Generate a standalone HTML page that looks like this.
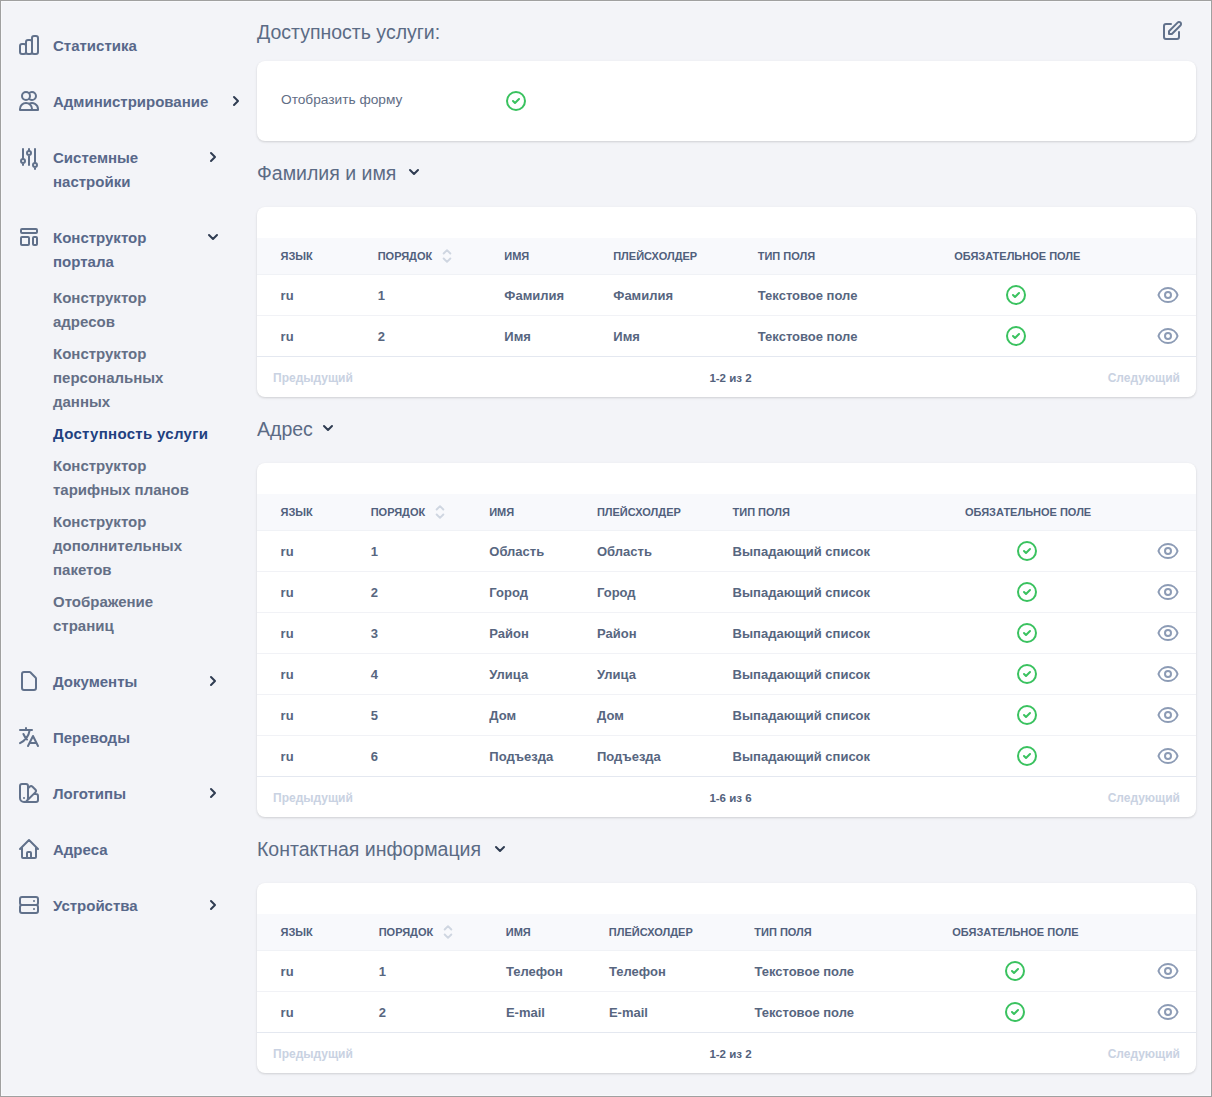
<!DOCTYPE html>
<html><head><meta charset="utf-8"><style>
html,body{margin:0;padding:0}
body{width:1212px;height:1097px;overflow:hidden;background:#f3f4f8;position:relative;font-family:"Liberation Sans", sans-serif}
.t{position:absolute;white-space:nowrap;line-height:20px}
.i{position:absolute;overflow:visible}
.card{position:absolute;left:257px;width:939px;background:#fff;border-radius:8px;box-shadow:0 1px 3px rgba(0,0,0,0.1),0 1px 2px rgba(0,0,0,0.06);overflow:hidden}
.thb{position:absolute;left:0;right:0;height:36px;background:#f8f9fc;border-bottom:1px solid #f0f2f6}
.rb{position:absolute;left:0;right:0;height:1px}
.frame{position:absolute;left:0;top:0;width:1210px;height:1095px;border:1px solid #a0a0a0;box-shadow:inset 0 0 0 1px #f8f9fc;z-index:10;pointer-events:none}
</style></head><body>
<svg class="i" style="left:17px;top:33px;" width="24" height="24" viewBox="0 0 24 24" fill="none" stroke="#61718b" stroke-width="2" stroke-linecap="round" stroke-linejoin="round"><path d="M9 19v-6a2 2 0 00-2-2H5a2 2 0 00-2 2v6a2 2 0 002 2h2a2 2 0 002-2zm0 0V9a2 2 0 012-2h2a2 2 0 012 2v10m-6 0a2 2 0 002 2h2a2 2 0 002-2m0 0V5a2 2 0 012-2h2a2 2 0 012 2v14a2 2 0 01-2 2h-2a2 2 0 01-2-2z"/></svg>
<div class="t" style="left:53px;top:35.65px;font-size:15px;font-weight:700;color:#58688a;">Статистика</div>
<svg class="i" style="left:17px;top:89px;" width="24" height="24" viewBox="0 0 24 24" fill="none" stroke="#61718b" stroke-width="2" stroke-linecap="round" stroke-linejoin="round"><path d="M12 4.354a4 4 0 110 5.292M15 21H3v-1a6 6 0 0112 0v1zm0 0h6v-1a6 6 0 00-9-5.197M13 7a4 4 0 11-8 0 4 4 0 018 0z"/></svg>
<div class="t" style="left:53px;top:91.65px;font-size:15px;font-weight:700;color:#58688a;">Администрирование</div>
<svg class="i" style="left:231px;top:95px" width="12" height="12" viewBox="0 0 12 12" fill="none" stroke="#2f3c52" stroke-width="2" stroke-linecap="round" stroke-linejoin="round"><path d="M3 2l4 4-4 4"/></svg>
<svg class="i" style="left:17px;top:145px;" width="24" height="24" viewBox="0 0 24 24" fill="none" stroke="#61718b" stroke-width="2" stroke-linecap="round" stroke-linejoin="round"><path d="M12 6V4m0 2a2 2 0 100 4m0-4a2 2 0 110 4m-6 8a2 2 0 100-4m0 4a2 2 0 110-4m0 4v2m0-6V4m6 6v10m6 2a2 2 0 100-4m0 4a2 2 0 110-4m0 4v2m0-6V4"/></svg>
<div class="t" style="left:53px;top:147.65px;font-size:15px;font-weight:700;color:#58688a;">Системные</div>
<div class="t" style="left:53px;top:171.65px;font-size:15px;font-weight:700;color:#58688a;">настройки</div>
<svg class="i" style="left:208px;top:151px" width="12" height="12" viewBox="0 0 12 12" fill="none" stroke="#2f3c52" stroke-width="2" stroke-linecap="round" stroke-linejoin="round"><path d="M3 2l4 4-4 4"/></svg>
<svg class="i" style="left:17px;top:225px;" width="24" height="24" viewBox="0 0 24 24" fill="none" stroke="#61718b" stroke-width="2" stroke-linecap="round" stroke-linejoin="round"><path d="M4 5a1 1 0 011-1h14a1 1 0 011 1v2a1 1 0 01-1 1H5a1 1 0 01-1-1V5zM4 13a1 1 0 011-1h6a1 1 0 011 1v6a1 1 0 01-1 1H5a1 1 0 01-1-1v-6zM16 13a1 1 0 011-1h2a1 1 0 011 1v6a1 1 0 01-1 1h-2a1 1 0 01-1-1v-6z"/></svg>
<div class="t" style="left:53px;top:227.65px;font-size:15px;font-weight:700;color:#58688a;">Конструктор</div>
<div class="t" style="left:53px;top:251.65px;font-size:15px;font-weight:700;color:#58688a;">портала</div>
<svg class="i" style="left:207px;top:231px" width="12" height="12" viewBox="0 0 12 12" fill="none" stroke="#2f3c52" stroke-width="2" stroke-linecap="round" stroke-linejoin="round"><path d="M2 4l4 4 4-4"/></svg>
<div class="t" style="left:53px;top:287.65px;font-size:15px;font-weight:700;color:#646f86;">Конструктор</div>
<div class="t" style="left:53px;top:311.65px;font-size:15px;font-weight:700;color:#646f86;">адресов</div>
<div class="t" style="left:53px;top:343.65px;font-size:15px;font-weight:700;color:#646f86;">Конструктор</div>
<div class="t" style="left:53px;top:367.65px;font-size:15px;font-weight:700;color:#646f86;">персональных</div>
<div class="t" style="left:53px;top:391.65px;font-size:15px;font-weight:700;color:#646f86;">данных</div>
<div class="t" style="left:53px;top:423.65px;font-size:15px;font-weight:700;color:#21407f;letter-spacing:0.3px">Доступность услуги</div>
<div class="t" style="left:53px;top:455.65px;font-size:15px;font-weight:700;color:#646f86;">Конструктор</div>
<div class="t" style="left:53px;top:479.65px;font-size:15px;font-weight:700;color:#646f86;">тарифных планов</div>
<div class="t" style="left:53px;top:511.65px;font-size:15px;font-weight:700;color:#646f86;">Конструктор</div>
<div class="t" style="left:53px;top:535.65px;font-size:15px;font-weight:700;color:#646f86;">дополнительных</div>
<div class="t" style="left:53px;top:559.65px;font-size:15px;font-weight:700;color:#646f86;">пакетов</div>
<div class="t" style="left:53px;top:591.65px;font-size:15px;font-weight:700;color:#646f86;">Отображение</div>
<div class="t" style="left:53px;top:615.65px;font-size:15px;font-weight:700;color:#646f86;">страниц</div>
<svg class="i" style="left:17px;top:669px;" width="24" height="24" viewBox="0 0 24 24" fill="none" stroke="#61718b" stroke-width="2" stroke-linecap="round" stroke-linejoin="round"><path d="M7 21h10a2 2 0 002-2V9.414a1 1 0 00-.293-.707l-5.414-5.414A1 1 0 0012.586 3H7a2 2 0 00-2 2v14a2 2 0 002 2z"/></svg>
<div class="t" style="left:53px;top:671.65px;font-size:15px;font-weight:700;color:#58688a;">Документы</div>
<svg class="i" style="left:208px;top:675px" width="12" height="12" viewBox="0 0 12 12" fill="none" stroke="#2f3c52" stroke-width="2" stroke-linecap="round" stroke-linejoin="round"><path d="M3 2l4 4-4 4"/></svg>
<svg class="i" style="left:17px;top:725px;" width="24" height="24" viewBox="0 0 24 24" fill="none" stroke="#61718b" stroke-width="2" stroke-linecap="round" stroke-linejoin="round"><path d="M3 5h12M9 3v2m1.048 9.5A18.022 18.022 0 016.412 9m6.088 9h7M11 21l5-10 5 10M12.751 5C11.783 10.77 8.07 15.61 3 18.129"/></svg>
<div class="t" style="left:53px;top:727.65px;font-size:15px;font-weight:700;color:#58688a;">Переводы</div>
<svg class="i" style="left:17px;top:781px;" width="24" height="24" viewBox="0 0 24 24" fill="none" stroke="#61718b" stroke-width="2" stroke-linecap="round" stroke-linejoin="round"><path d="M7 21a4 4 0 01-4-4V5a2 2 0 012-2h4a2 2 0 012 2v12a4 4 0 01-4 4zm0 0h12a2 2 0 002-2v-4a2 2 0 00-2-2h-2.343M11 7.343l1.657-1.657a2 2 0 012.828 0l2.829 2.829a2 2 0 010 2.828l-8.486 8.485M7 17h.01"/></svg>
<div class="t" style="left:53px;top:783.65px;font-size:15px;font-weight:700;color:#58688a;">Логотипы</div>
<svg class="i" style="left:208px;top:787px" width="12" height="12" viewBox="0 0 12 12" fill="none" stroke="#2f3c52" stroke-width="2" stroke-linecap="round" stroke-linejoin="round"><path d="M3 2l4 4-4 4"/></svg>
<svg class="i" style="left:17px;top:837px;" width="24" height="24" viewBox="0 0 24 24" fill="none" stroke="#61718b" stroke-width="2" stroke-linecap="round" stroke-linejoin="round"><path d="M3 12l2-2m0 0l7-7 7 7M5 10v10a1 1 0 001 1h3m10-11l2 2m-2-2v10a1 1 0 01-1 1h-3m-6 0a1 1 0 001-1v-4a1 1 0 011-1h2a1 1 0 011 1v4a1 1 0 001 1m-6 0h6"/></svg>
<div class="t" style="left:53px;top:839.65px;font-size:15px;font-weight:700;color:#58688a;">Адреса</div>
<svg class="i" style="left:17px;top:893px;" width="24" height="24" viewBox="0 0 24 24" fill="none" stroke="#61718b" stroke-width="2" stroke-linecap="round" stroke-linejoin="round"><path d="M5 12h14M5 12a2 2 0 01-2-2V6a2 2 0 012-2h14a2 2 0 012 2v4a2 2 0 01-2 2M5 12a2 2 0 00-2 2v4a2 2 0 002 2h14a2 2 0 002-2v-4a2 2 0 00-2-2m-2-4h.01M17 16h.01"/></svg>
<div class="t" style="left:53px;top:895.65px;font-size:15px;font-weight:700;color:#58688a;">Устройства</div>
<svg class="i" style="left:208px;top:899px" width="12" height="12" viewBox="0 0 12 12" fill="none" stroke="#2f3c52" stroke-width="2" stroke-linecap="round" stroke-linejoin="round"><path d="M3 2l4 4-4 4"/></svg>
<div class="t" style="left:257px;top:22.04px;font-size:19.5px;font-weight:400;color:#5b6b85;">Доступность услуги:</div>
<svg class="i" style="left:1160px;top:19px;" width="24" height="24" viewBox="0 0 24 24" fill="none" stroke="#61718b" stroke-width="2" stroke-linecap="round" stroke-linejoin="round"><path d="M11 5H6a2 2 0 00-2 2v11a2 2 0 002 2h11a2 2 0 002-2v-5m-1.414-9.414a2 2 0 112.828 2.828L11.828 15H9v-2.828l8.586-8.586z"/></svg>
<div class="card" style="top:61px;height:80px"></div>
<div class="t" style="left:281px;top:90.15px;font-size:13.7px;font-weight:400;color:#5f6d85;">Отобразить форму</div>
<svg class="i" style="left:504px;top:89px;" width="24" height="24" viewBox="0 0 24 24" fill="none" stroke="#3ac25f" stroke-width="2" stroke-linecap="round" stroke-linejoin="round"><path d="M9 12l2 2 4-4m6 2a9 9 0 11-18 0 9 9 0 0118 0z"/></svg>
<div class="t" style="left:257px;top:162.74px;font-size:19.5px;font-weight:400;color:#5b6b85;">Фамилия и имя</div>
<svg class="i" style="left:408px;top:166px" width="12" height="12" viewBox="0 0 12 12" fill="none" stroke="#2f3c52" stroke-width="2" stroke-linecap="round" stroke-linejoin="round"><path d="M2 4l4 4 4-4"/></svg>
<div class="card" style="top:207px;height:190px">
<div class="thb" style="top:31px"></div>
<div class="rb" style="top:108px;background:#f1f2f6"></div>
<div class="rb" style="top:149px;background:#e4e8f0"></div>
</div>
<div class="t" style="left:280.5px;top:246.19px;font-size:11px;font-weight:700;color:#50607c;">ЯЗЫК</div>
<div class="t" style="left:377.7px;top:246.19px;font-size:11px;font-weight:700;color:#50607c;">ПОРЯДОК</div>
<div class="t" style="left:504.25px;top:246.19px;font-size:11px;font-weight:700;color:#50607c;">ИМЯ</div>
<div class="t" style="left:613.2px;top:246.19px;font-size:11px;font-weight:700;color:#50607c;">ПЛЕЙСХОЛДЕР</div>
<div class="t" style="left:757.7px;top:246.19px;font-size:11px;font-weight:700;color:#50607c;">ТИП ПОЛЯ</div>
<div class="t" style="left:954.2px;top:246.19px;font-size:11px;font-weight:700;color:#50607c;">ОБЯЗАТЕЛЬНОЕ ПОЛЕ</div>
<svg class="i" style="left:437.2px;top:246px;" width="20" height="20" viewBox="0 0 24 24" fill="none" stroke="#cfd6e1" stroke-width="2.3" stroke-linecap="round" stroke-linejoin="round"><path d="M8 9l4-4 4 4m0 6l-4 4-4-4"/></svg>
<div class="t" style="left:280.6px;top:285.50px;font-size:13px;font-weight:700;color:#57667f;">ru</div>
<div class="t" style="left:377.8px;top:285.50px;font-size:13px;font-weight:700;color:#57667f;">1</div>
<div class="t" style="left:504.35px;top:285.50px;font-size:13px;font-weight:700;color:#57667f;">Фамилия</div>
<div class="t" style="left:613.3000000000001px;top:285.50px;font-size:13px;font-weight:700;color:#57667f;">Фамилия</div>
<div class="t" style="left:757.8000000000001px;top:285.50px;font-size:13px;font-weight:700;color:#57667f;">Текстовое поле</div>
<svg class="i" style="left:1004px;top:283px;" width="24" height="24" viewBox="0 0 24 24" fill="none" stroke="#3ac25f" stroke-width="2" stroke-linecap="round" stroke-linejoin="round"><path d="M9 12l2 2 4-4m6 2a9 9 0 11-18 0 9 9 0 0118 0z"/></svg>
<svg class="i" style="left:1156px;top:283px;" width="24" height="24" viewBox="0 0 24 24" fill="none" stroke="#8c9bb5" stroke-width="2" stroke-linecap="round" stroke-linejoin="round"><path d="M15 12a3 3 0 11-6 0 3 3 0 016 0z"/><path d="M2.458 12C3.732 7.943 7.523 5 12 5c4.478 0 8.268 2.943 9.542 7-1.274 4.057-5.064 7-9.542 7-4.477 0-8.268-2.943-9.542-7z"/></svg>
<div class="t" style="left:280.6px;top:326.50px;font-size:13px;font-weight:700;color:#57667f;">ru</div>
<div class="t" style="left:377.8px;top:326.50px;font-size:13px;font-weight:700;color:#57667f;">2</div>
<div class="t" style="left:504.35px;top:326.50px;font-size:13px;font-weight:700;color:#57667f;">Имя</div>
<div class="t" style="left:613.3000000000001px;top:326.50px;font-size:13px;font-weight:700;color:#57667f;">Имя</div>
<div class="t" style="left:757.8000000000001px;top:326.50px;font-size:13px;font-weight:700;color:#57667f;">Текстовое поле</div>
<svg class="i" style="left:1004px;top:324px;" width="24" height="24" viewBox="0 0 24 24" fill="none" stroke="#3ac25f" stroke-width="2" stroke-linecap="round" stroke-linejoin="round"><path d="M9 12l2 2 4-4m6 2a9 9 0 11-18 0 9 9 0 0118 0z"/></svg>
<svg class="i" style="left:1156px;top:324px;" width="24" height="24" viewBox="0 0 24 24" fill="none" stroke="#8c9bb5" stroke-width="2" stroke-linecap="round" stroke-linejoin="round"><path d="M15 12a3 3 0 11-6 0 3 3 0 016 0z"/><path d="M2.458 12C3.732 7.943 7.523 5 12 5c4.478 0 8.268 2.943 9.542 7-1.274 4.057-5.064 7-9.542 7-4.477 0-8.268-2.943-9.542-7z"/></svg>
<div class="t" style="left:273px;top:368.34px;font-size:12px;font-weight:700;color:#c9d2e2;">Предыдущий</div>
<div class="t" style="left:265px;width:931px;text-align:center;top:368.02px;font-size:11.5px;font-weight:700;color:#52617c">1-2 из 2</div>
<div class="t" style="right:32px;top:368.34px;font-size:12px;font-weight:700;color:#c9d2e2">Следующий</div>
<div class="t" style="left:257px;top:418.74px;font-size:19.5px;font-weight:400;color:#5b6b85;">Адрес</div>
<svg class="i" style="left:322px;top:422px" width="12" height="12" viewBox="0 0 12 12" fill="none" stroke="#2f3c52" stroke-width="2" stroke-linecap="round" stroke-linejoin="round"><path d="M2 4l4 4 4-4"/></svg>
<div class="card" style="top:463px;height:354px">
<div class="thb" style="top:31px"></div>
<div class="rb" style="top:108px;background:#f1f2f6"></div>
<div class="rb" style="top:149px;background:#f1f2f6"></div>
<div class="rb" style="top:190px;background:#f1f2f6"></div>
<div class="rb" style="top:231px;background:#f1f2f6"></div>
<div class="rb" style="top:272px;background:#f1f2f6"></div>
<div class="rb" style="top:313px;background:#e4e8f0"></div>
</div>
<div class="t" style="left:280.5px;top:502.19px;font-size:11px;font-weight:700;color:#50607c;">ЯЗЫК</div>
<div class="t" style="left:370.7px;top:502.19px;font-size:11px;font-weight:700;color:#50607c;">ПОРЯДОК</div>
<div class="t" style="left:489.2px;top:502.19px;font-size:11px;font-weight:700;color:#50607c;">ИМЯ</div>
<div class="t" style="left:596.9px;top:502.19px;font-size:11px;font-weight:700;color:#50607c;">ПЛЕЙСХОЛДЕР</div>
<div class="t" style="left:732.5px;top:502.19px;font-size:11px;font-weight:700;color:#50607c;">ТИП ПОЛЯ</div>
<div class="t" style="left:965.0px;top:502.19px;font-size:11px;font-weight:700;color:#50607c;">ОБЯЗАТЕЛЬНОЕ ПОЛЕ</div>
<svg class="i" style="left:430.2px;top:502px;" width="20" height="20" viewBox="0 0 24 24" fill="none" stroke="#cfd6e1" stroke-width="2.3" stroke-linecap="round" stroke-linejoin="round"><path d="M8 9l4-4 4 4m0 6l-4 4-4-4"/></svg>
<div class="t" style="left:280.6px;top:541.50px;font-size:13px;font-weight:700;color:#57667f;">ru</div>
<div class="t" style="left:370.8px;top:541.50px;font-size:13px;font-weight:700;color:#57667f;">1</div>
<div class="t" style="left:489.3px;top:541.50px;font-size:13px;font-weight:700;color:#57667f;">Область</div>
<div class="t" style="left:597.0px;top:541.50px;font-size:13px;font-weight:700;color:#57667f;">Область</div>
<div class="t" style="left:732.6px;top:541.50px;font-size:13px;font-weight:700;color:#57667f;">Выпадающий список</div>
<svg class="i" style="left:1015px;top:539px;" width="24" height="24" viewBox="0 0 24 24" fill="none" stroke="#3ac25f" stroke-width="2" stroke-linecap="round" stroke-linejoin="round"><path d="M9 12l2 2 4-4m6 2a9 9 0 11-18 0 9 9 0 0118 0z"/></svg>
<svg class="i" style="left:1156px;top:539px;" width="24" height="24" viewBox="0 0 24 24" fill="none" stroke="#8c9bb5" stroke-width="2" stroke-linecap="round" stroke-linejoin="round"><path d="M15 12a3 3 0 11-6 0 3 3 0 016 0z"/><path d="M2.458 12C3.732 7.943 7.523 5 12 5c4.478 0 8.268 2.943 9.542 7-1.274 4.057-5.064 7-9.542 7-4.477 0-8.268-2.943-9.542-7z"/></svg>
<div class="t" style="left:280.6px;top:582.50px;font-size:13px;font-weight:700;color:#57667f;">ru</div>
<div class="t" style="left:370.8px;top:582.50px;font-size:13px;font-weight:700;color:#57667f;">2</div>
<div class="t" style="left:489.3px;top:582.50px;font-size:13px;font-weight:700;color:#57667f;">Город</div>
<div class="t" style="left:597.0px;top:582.50px;font-size:13px;font-weight:700;color:#57667f;">Город</div>
<div class="t" style="left:732.6px;top:582.50px;font-size:13px;font-weight:700;color:#57667f;">Выпадающий список</div>
<svg class="i" style="left:1015px;top:580px;" width="24" height="24" viewBox="0 0 24 24" fill="none" stroke="#3ac25f" stroke-width="2" stroke-linecap="round" stroke-linejoin="round"><path d="M9 12l2 2 4-4m6 2a9 9 0 11-18 0 9 9 0 0118 0z"/></svg>
<svg class="i" style="left:1156px;top:580px;" width="24" height="24" viewBox="0 0 24 24" fill="none" stroke="#8c9bb5" stroke-width="2" stroke-linecap="round" stroke-linejoin="round"><path d="M15 12a3 3 0 11-6 0 3 3 0 016 0z"/><path d="M2.458 12C3.732 7.943 7.523 5 12 5c4.478 0 8.268 2.943 9.542 7-1.274 4.057-5.064 7-9.542 7-4.477 0-8.268-2.943-9.542-7z"/></svg>
<div class="t" style="left:280.6px;top:623.50px;font-size:13px;font-weight:700;color:#57667f;">ru</div>
<div class="t" style="left:370.8px;top:623.50px;font-size:13px;font-weight:700;color:#57667f;">3</div>
<div class="t" style="left:489.3px;top:623.50px;font-size:13px;font-weight:700;color:#57667f;">Район</div>
<div class="t" style="left:597.0px;top:623.50px;font-size:13px;font-weight:700;color:#57667f;">Район</div>
<div class="t" style="left:732.6px;top:623.50px;font-size:13px;font-weight:700;color:#57667f;">Выпадающий список</div>
<svg class="i" style="left:1015px;top:621px;" width="24" height="24" viewBox="0 0 24 24" fill="none" stroke="#3ac25f" stroke-width="2" stroke-linecap="round" stroke-linejoin="round"><path d="M9 12l2 2 4-4m6 2a9 9 0 11-18 0 9 9 0 0118 0z"/></svg>
<svg class="i" style="left:1156px;top:621px;" width="24" height="24" viewBox="0 0 24 24" fill="none" stroke="#8c9bb5" stroke-width="2" stroke-linecap="round" stroke-linejoin="round"><path d="M15 12a3 3 0 11-6 0 3 3 0 016 0z"/><path d="M2.458 12C3.732 7.943 7.523 5 12 5c4.478 0 8.268 2.943 9.542 7-1.274 4.057-5.064 7-9.542 7-4.477 0-8.268-2.943-9.542-7z"/></svg>
<div class="t" style="left:280.6px;top:664.50px;font-size:13px;font-weight:700;color:#57667f;">ru</div>
<div class="t" style="left:370.8px;top:664.50px;font-size:13px;font-weight:700;color:#57667f;">4</div>
<div class="t" style="left:489.3px;top:664.50px;font-size:13px;font-weight:700;color:#57667f;">Улица</div>
<div class="t" style="left:597.0px;top:664.50px;font-size:13px;font-weight:700;color:#57667f;">Улица</div>
<div class="t" style="left:732.6px;top:664.50px;font-size:13px;font-weight:700;color:#57667f;">Выпадающий список</div>
<svg class="i" style="left:1015px;top:662px;" width="24" height="24" viewBox="0 0 24 24" fill="none" stroke="#3ac25f" stroke-width="2" stroke-linecap="round" stroke-linejoin="round"><path d="M9 12l2 2 4-4m6 2a9 9 0 11-18 0 9 9 0 0118 0z"/></svg>
<svg class="i" style="left:1156px;top:662px;" width="24" height="24" viewBox="0 0 24 24" fill="none" stroke="#8c9bb5" stroke-width="2" stroke-linecap="round" stroke-linejoin="round"><path d="M15 12a3 3 0 11-6 0 3 3 0 016 0z"/><path d="M2.458 12C3.732 7.943 7.523 5 12 5c4.478 0 8.268 2.943 9.542 7-1.274 4.057-5.064 7-9.542 7-4.477 0-8.268-2.943-9.542-7z"/></svg>
<div class="t" style="left:280.6px;top:705.50px;font-size:13px;font-weight:700;color:#57667f;">ru</div>
<div class="t" style="left:370.8px;top:705.50px;font-size:13px;font-weight:700;color:#57667f;">5</div>
<div class="t" style="left:489.3px;top:705.50px;font-size:13px;font-weight:700;color:#57667f;">Дом</div>
<div class="t" style="left:597.0px;top:705.50px;font-size:13px;font-weight:700;color:#57667f;">Дом</div>
<div class="t" style="left:732.6px;top:705.50px;font-size:13px;font-weight:700;color:#57667f;">Выпадающий список</div>
<svg class="i" style="left:1015px;top:703px;" width="24" height="24" viewBox="0 0 24 24" fill="none" stroke="#3ac25f" stroke-width="2" stroke-linecap="round" stroke-linejoin="round"><path d="M9 12l2 2 4-4m6 2a9 9 0 11-18 0 9 9 0 0118 0z"/></svg>
<svg class="i" style="left:1156px;top:703px;" width="24" height="24" viewBox="0 0 24 24" fill="none" stroke="#8c9bb5" stroke-width="2" stroke-linecap="round" stroke-linejoin="round"><path d="M15 12a3 3 0 11-6 0 3 3 0 016 0z"/><path d="M2.458 12C3.732 7.943 7.523 5 12 5c4.478 0 8.268 2.943 9.542 7-1.274 4.057-5.064 7-9.542 7-4.477 0-8.268-2.943-9.542-7z"/></svg>
<div class="t" style="left:280.6px;top:746.50px;font-size:13px;font-weight:700;color:#57667f;">ru</div>
<div class="t" style="left:370.8px;top:746.50px;font-size:13px;font-weight:700;color:#57667f;">6</div>
<div class="t" style="left:489.3px;top:746.50px;font-size:13px;font-weight:700;color:#57667f;">Подъезда</div>
<div class="t" style="left:597.0px;top:746.50px;font-size:13px;font-weight:700;color:#57667f;">Подъезда</div>
<div class="t" style="left:732.6px;top:746.50px;font-size:13px;font-weight:700;color:#57667f;">Выпадающий список</div>
<svg class="i" style="left:1015px;top:744px;" width="24" height="24" viewBox="0 0 24 24" fill="none" stroke="#3ac25f" stroke-width="2" stroke-linecap="round" stroke-linejoin="round"><path d="M9 12l2 2 4-4m6 2a9 9 0 11-18 0 9 9 0 0118 0z"/></svg>
<svg class="i" style="left:1156px;top:744px;" width="24" height="24" viewBox="0 0 24 24" fill="none" stroke="#8c9bb5" stroke-width="2" stroke-linecap="round" stroke-linejoin="round"><path d="M15 12a3 3 0 11-6 0 3 3 0 016 0z"/><path d="M2.458 12C3.732 7.943 7.523 5 12 5c4.478 0 8.268 2.943 9.542 7-1.274 4.057-5.064 7-9.542 7-4.477 0-8.268-2.943-9.542-7z"/></svg>
<div class="t" style="left:273px;top:788.34px;font-size:12px;font-weight:700;color:#c9d2e2;">Предыдущий</div>
<div class="t" style="left:265px;width:931px;text-align:center;top:788.02px;font-size:11.5px;font-weight:700;color:#52617c">1-6 из 6</div>
<div class="t" style="right:32px;top:788.34px;font-size:12px;font-weight:700;color:#c9d2e2">Следующий</div>
<div class="t" style="left:257px;top:838.74px;font-size:19.5px;font-weight:400;color:#5b6b85;">Контактная информация</div>
<svg class="i" style="left:494px;top:842.5px" width="12" height="12" viewBox="0 0 12 12" fill="none" stroke="#2f3c52" stroke-width="2" stroke-linecap="round" stroke-linejoin="round"><path d="M2 4l4 4 4-4"/></svg>
<div class="card" style="top:883px;height:190px">
<div class="thb" style="top:31px"></div>
<div class="rb" style="top:108px;background:#f1f2f6"></div>
<div class="rb" style="top:149px;background:#e4e8f0"></div>
</div>
<div class="t" style="left:280.5px;top:922.19px;font-size:11px;font-weight:700;color:#50607c;">ЯЗЫК</div>
<div class="t" style="left:378.7px;top:922.19px;font-size:11px;font-weight:700;color:#50607c;">ПОРЯДОК</div>
<div class="t" style="left:505.8px;top:922.19px;font-size:11px;font-weight:700;color:#50607c;">ИМЯ</div>
<div class="t" style="left:608.8px;top:922.19px;font-size:11px;font-weight:700;color:#50607c;">ПЛЕЙСХОЛДЕР</div>
<div class="t" style="left:754.3px;top:922.19px;font-size:11px;font-weight:700;color:#50607c;">ТИП ПОЛЯ</div>
<div class="t" style="left:952.3px;top:922.19px;font-size:11px;font-weight:700;color:#50607c;">ОБЯЗАТЕЛЬНОЕ ПОЛЕ</div>
<svg class="i" style="left:438.2px;top:922px;" width="20" height="20" viewBox="0 0 24 24" fill="none" stroke="#cfd6e1" stroke-width="2.3" stroke-linecap="round" stroke-linejoin="round"><path d="M8 9l4-4 4 4m0 6l-4 4-4-4"/></svg>
<div class="t" style="left:280.6px;top:961.50px;font-size:13px;font-weight:700;color:#57667f;">ru</div>
<div class="t" style="left:378.8px;top:961.50px;font-size:13px;font-weight:700;color:#57667f;">1</div>
<div class="t" style="left:505.90000000000003px;top:961.50px;font-size:13px;font-weight:700;color:#57667f;">Телефон</div>
<div class="t" style="left:608.9px;top:961.50px;font-size:13px;font-weight:700;color:#57667f;">Телефон</div>
<div class="t" style="left:754.4px;top:961.50px;font-size:13px;font-weight:700;color:#57667f;">Текстовое поле</div>
<svg class="i" style="left:1003px;top:959px;" width="24" height="24" viewBox="0 0 24 24" fill="none" stroke="#3ac25f" stroke-width="2" stroke-linecap="round" stroke-linejoin="round"><path d="M9 12l2 2 4-4m6 2a9 9 0 11-18 0 9 9 0 0118 0z"/></svg>
<svg class="i" style="left:1156px;top:959px;" width="24" height="24" viewBox="0 0 24 24" fill="none" stroke="#8c9bb5" stroke-width="2" stroke-linecap="round" stroke-linejoin="round"><path d="M15 12a3 3 0 11-6 0 3 3 0 016 0z"/><path d="M2.458 12C3.732 7.943 7.523 5 12 5c4.478 0 8.268 2.943 9.542 7-1.274 4.057-5.064 7-9.542 7-4.477 0-8.268-2.943-9.542-7z"/></svg>
<div class="t" style="left:280.6px;top:1002.50px;font-size:13px;font-weight:700;color:#57667f;">ru</div>
<div class="t" style="left:378.8px;top:1002.50px;font-size:13px;font-weight:700;color:#57667f;">2</div>
<div class="t" style="left:505.90000000000003px;top:1002.50px;font-size:13px;font-weight:700;color:#57667f;">E-mail</div>
<div class="t" style="left:608.9px;top:1002.50px;font-size:13px;font-weight:700;color:#57667f;">E-mail</div>
<div class="t" style="left:754.4px;top:1002.50px;font-size:13px;font-weight:700;color:#57667f;">Текстовое поле</div>
<svg class="i" style="left:1003px;top:1000px;" width="24" height="24" viewBox="0 0 24 24" fill="none" stroke="#3ac25f" stroke-width="2" stroke-linecap="round" stroke-linejoin="round"><path d="M9 12l2 2 4-4m6 2a9 9 0 11-18 0 9 9 0 0118 0z"/></svg>
<svg class="i" style="left:1156px;top:1000px;" width="24" height="24" viewBox="0 0 24 24" fill="none" stroke="#8c9bb5" stroke-width="2" stroke-linecap="round" stroke-linejoin="round"><path d="M15 12a3 3 0 11-6 0 3 3 0 016 0z"/><path d="M2.458 12C3.732 7.943 7.523 5 12 5c4.478 0 8.268 2.943 9.542 7-1.274 4.057-5.064 7-9.542 7-4.477 0-8.268-2.943-9.542-7z"/></svg>
<div class="t" style="left:273px;top:1044.34px;font-size:12px;font-weight:700;color:#c9d2e2;">Предыдущий</div>
<div class="t" style="left:265px;width:931px;text-align:center;top:1044.02px;font-size:11.5px;font-weight:700;color:#52617c">1-2 из 2</div>
<div class="t" style="right:32px;top:1044.34px;font-size:12px;font-weight:700;color:#c9d2e2">Следующий</div>
<div class="frame"></div>
</body></html>
